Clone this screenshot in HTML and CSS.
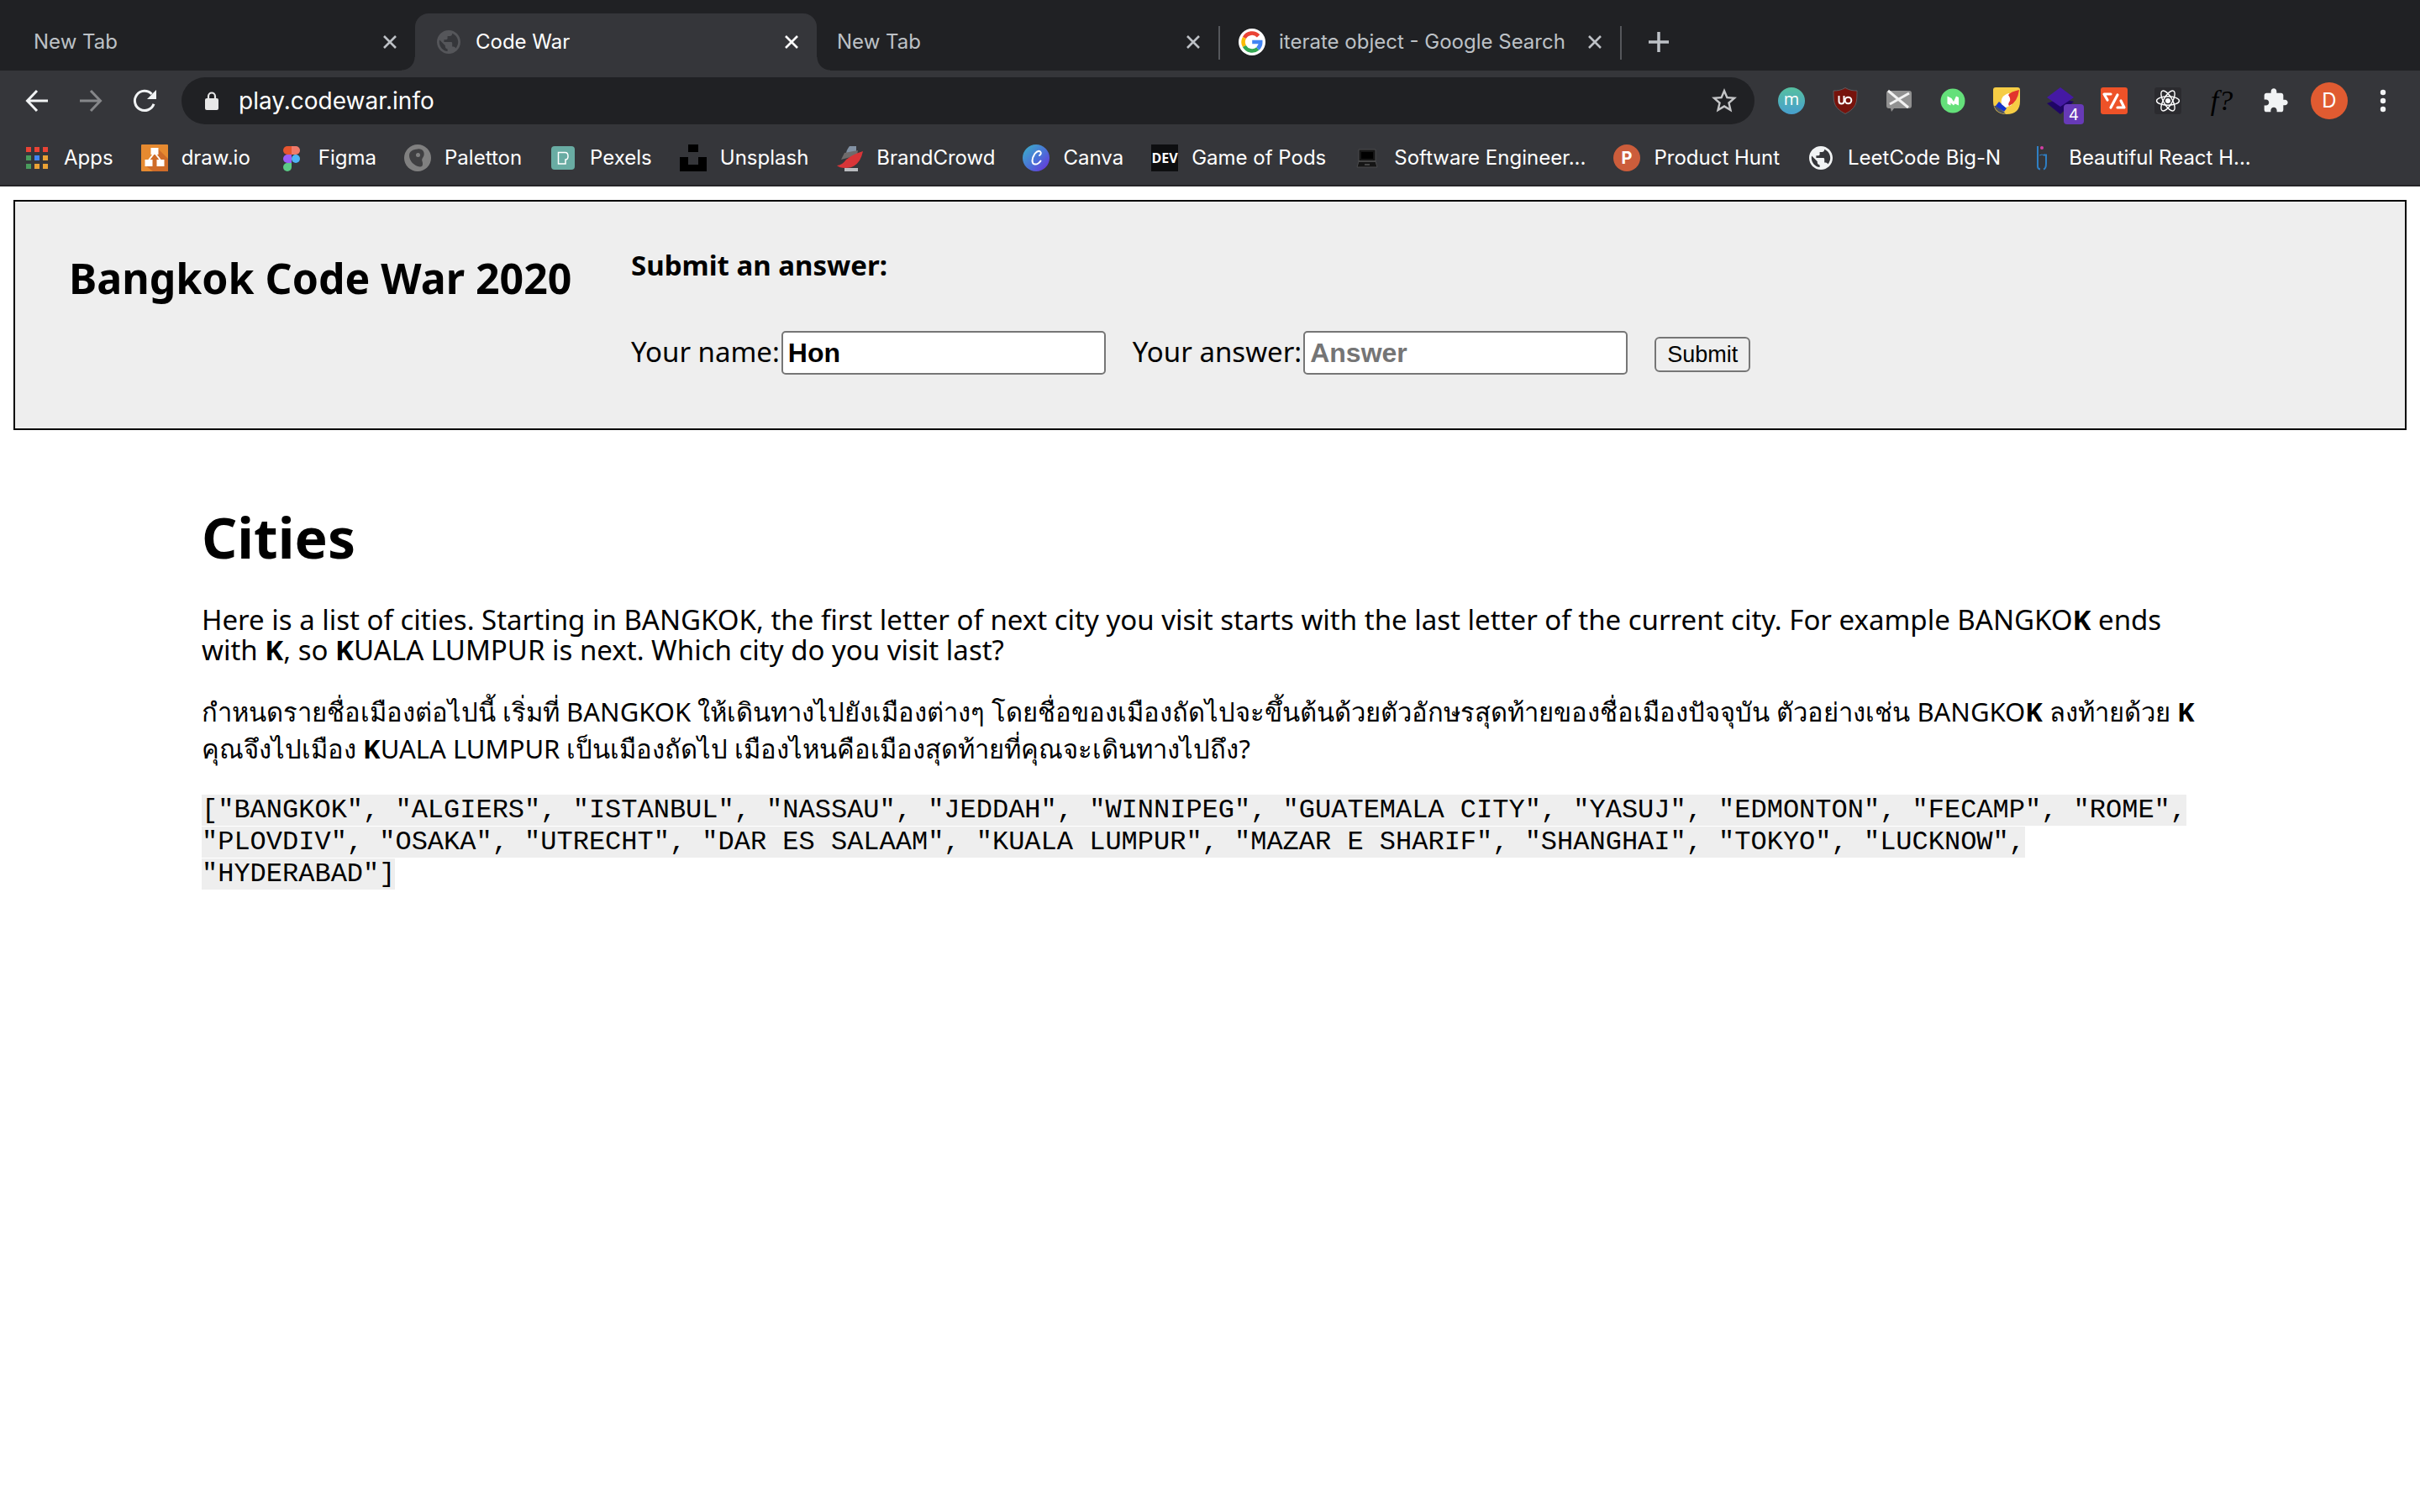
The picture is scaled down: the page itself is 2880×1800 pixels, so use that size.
FILE: index.html
```html
<!DOCTYPE html>
<html lang="en">
<head>
<meta charset="utf-8">
<title>Code War</title>
<link rel="stylesheet" href="styles.css">
</head>
<body>
<svg class="defs" aria-hidden="true">
  <symbol id="globe" viewBox="2 2 20 20"><path d="M12 2C6.480 2 2 6.480 2 12s4.480 10 10 10 10-4.480 10-10S17.520 2 12 2zm-1 17.930c-3.950-.490-7-3.850-7-7.930 0-.620.080-1.210.210-1.790L9 15v1c0 1.100.900 2 2 2v1.930zm6.900-2.540c-.260-.810-1-1.390-1.900-1.390h-1v-3c0-.550-.450-1-1-1H8v-2h2c.550 0 1-.450 1-1V7h2c1.100 0 2-.900 2-2v-.410c2.930 1.190 5 4.060 5 7.410 0 2.080-.800 3.970-2.100 5.390z"/></symbol>
  <symbol id="close" viewBox="0 0 20 20"><path d="M3 3l14 14M17 3L3 17" fill="none" stroke="currentColor" stroke-width="2.600"/></symbol>
</svg>

<div class="browser">
  <div class="tabs">
    <div class="tab"><span class="tab-title">New Tab</span><button class="tab-close" aria-label="Close tab"><svg class="x"><use href="#close"/></svg></button></div>
    <div class="tab tab-active"><span class="tab-icon"><svg class="globe-dim"><use href="#globe"/></svg></span><span class="tab-title">Code War</span><button class="tab-close" aria-label="Close tab"><svg class="x"><use href="#close"/></svg></button></div>
    <div class="tab tab-line"><span class="tab-title">New Tab</span><button class="tab-close" aria-label="Close tab"><svg class="x"><use href="#close"/></svg></button></div>
    <div class="tab tab-line"><span class="tab-icon"><svg class="icon" viewBox="0 0 32 32"><circle cx="16" cy="16" r="16" fill="#fff"/><g fill="none" stroke-width="4.600"><path d="M23.600 8.800A10.400 10.400 0 0 0 6.900 11" stroke="#ea4335"/><path d="M6.900 11a10.400 10.400 0 0 0 0 10" stroke="#fbbc05"/><path d="M6.900 21a10.400 10.400 0 0 0 15.900 3" stroke="#34a853"/><path d="M22.800 24A10.400 10.400 0 0 0 26.200 16H16.200" stroke="#4285f4"/></g></svg></span><span class="tab-title">iterate object - Google Search</span><button class="tab-close" aria-label="Close tab"><svg class="x"><use href="#close"/></svg></button></div>
    <button class="new-tab" aria-label="New tab"><svg class="icon" viewBox="0 0 32 32"><path d="M16 4v24M4 16h24" fill="none" stroke="currentColor" stroke-width="3.500"/></svg></button>
  </div>

  <div class="toolbar">
    <div class="nav">
      <button aria-label="Back"><svg class="icon" viewBox="0 0 32 32"><path d="M29 16H5M16 4L4.500 16 16 28" fill="none" stroke="#f1f3f4" stroke-width="3"/></svg></button>
      <button aria-label="Forward"><svg class="icon" viewBox="0 0 32 32"><path d="M3 16h24M16 4l11.500 12L16 28" fill="none" stroke="#86878a" stroke-width="3"/></svg></button>
      <button aria-label="Reload"><svg class="icon" viewBox="0 0 32 32"><path d="M27 19.700A11.600 11.600 0 1 1 24.500 8" fill="none" stroke="#f1f3f4" stroke-width="3"/><path d="M30 3v11H19z" fill="#f1f3f4"/></svg></button>
    </div>
    <div class="omnibox">
      <svg class="icon" viewBox="0 0 32 32"><rect x="8" y="13" width="16" height="14" rx="2" fill="#e8e8e8"/><path d="M12 14v-3.500a4 4 0 0 1 8 0V14" fill="none" stroke="#e8e8e8" stroke-width="2.200"/></svg>
      <input class="url" type="text" aria-label="Address" value="play.codewar.info">
      <button aria-label="Bookmark this page"><svg class="star" viewBox="0 0 24 24"><path fill="#c4c5c7" d="M22 9.240l-7.190-.620L12 2 9.190 8.630 2 9.240l5.460 4.730L5.820 21 12 17.270 18.180 21l-1.630-7.030L22 9.240zM12 15.400l-3.760 2.270 1-4.280-3.320-2.880 4.380-.380L12 6.100l1.710 4.040 4.380.380-3.320 2.880 1 4.280L12 15.400z"/></svg></button>
    </div>
    <div class="extensions">
      <button aria-label="Extension m"><svg class="icon" viewBox="0 0 32 32"><defs><linearGradient id="mg" x2="0" y2="1"><stop stop-color="#56c0a0"/><stop offset="1" stop-color="#479fce"/></linearGradient></defs><circle cx="16" cy="16" r="16" fill="url(#mg)"/><text x="16" y="21" class="glyph glyph-m">m</text></svg></button>
      <button aria-label="Content blocker"><svg class="icon" viewBox="0 0 32 32"><path d="M16 .500C11 3.500 7 4 2 4c0 14 0 20 14 27.500C30 24 30 18 30 4 25 4 21 3.500 16 .500z" fill="#77130c" stroke="#5c5c60"/><path d="M8.500 10v6.500q0 3 3 3t3-3V10" fill="none" stroke="#fff" stroke-width="2"/><circle cx="19.500" cy="15.500" r="3.800" fill="none" stroke="#fff" stroke-width="2"/></svg></button>
      <button aria-label="Messages off"><svg class="icon" viewBox="0 0 32 32"><path d="M4 4h24q3 0 3 3v15q0 3-3 3H10l-3 4-1-4H4q-3 0-3-3V7q0-3 3-3z" fill="#919191"/><path d="M3 4l24 20M28 7L5 20" stroke="#f2f2f2" stroke-width="3"/></svg></button>
      <button aria-label="Medium"><svg class="icon" viewBox="0 0 32 32"><circle cx="16" cy="16" r="14.500" fill="#64e07a"/><path d="M9.500 10.500l5 2.500 2.500 4 3-6.500 3 1.500v9.500l-4.500-2-1.500 2-3.500-3v3l-4-2z" fill="#fff"/></svg></button>
      <button aria-label="Rocket"><svg class="icon" viewBox="0 0 32 32"><path d="M3 0h26q3 0 3 3v13q0 16-16 16Q0 32 0 16V3q0-3 3-3z" fill="#f6cd45"/><path d="M1 22l4 0 10 9.500Q4 31 1 22z" fill="#495063"/><path d="M7 17l9 8-3 4L3 22z" fill="#1434cc"/><path d="M10 20q-2-10 9-13l3 14-7 3z" fill="#fff"/><path d="M31 3Q21 5 18 9q3 4 2 7-3 4-1 6Q29 18 31 3z" fill="#e2342d"/></svg></button>
      <button class="ext-badged" aria-label="Layers, 4"><svg class="icon" viewBox="0 0 32 32"><path d="M0 19l16-6 16 4-16 15z" fill="#1f0566"/><path d="M16 0l16 12-16 11L0 12z" fill="#4519a4"/></svg><span class="badge">4</span></button>
      <button aria-label="Code snippets"><svg class="icon" viewBox="0 0 32 32"><rect width="32" height="32" rx="3" fill="#ee5228"/><path d="M12 8H4l4 7M20 9l-8 15M24 16l4 8h-8" fill="none" stroke="#fff" stroke-width="3.200" stroke-linejoin="round" stroke-linecap="round"/></svg></button>
      <button aria-label="React tools"><svg class="icon" viewBox="0 0 32 32"><rect width="32" height="32" rx="3" fill="#2b2b2f"/><g fill="none" stroke="#fff" stroke-width="1.400"><ellipse cx="16" cy="16" rx="13.500" ry="5.200"/><ellipse cx="16" cy="16" rx="13.500" ry="5.200" transform="rotate(60 16 16)"/><ellipse cx="16" cy="16" rx="13.500" ry="5.200" transform="rotate(120 16 16)"/></g><circle cx="16" cy="16" r="3" fill="#fff"/></svg></button>
      <button class="ext-font" aria-label="Font finder">f?</button>
      <button aria-label="Extensions"><svg class="icon" viewBox="0 0 24 24"><path fill="#f1f3f4" d="M20.500 11H19V7c0-1.100-.900-2-2-2h-4V3.500C13 2.120 11.880 1 10.500 1S8 2.120 8 3.500V5H4c-1.100 0-1.990.900-1.990 2v3.800H3.500c1.490 0 2.700 1.210 2.700 2.700s-1.210 2.700-2.700 2.700H2V20c0 1.100.900 2 2 2h3.800v-1.500c0-1.490 1.210-2.700 2.700-2.700 1.490 0 2.700 1.210 2.700 2.700V22H17c1.100 0 2-.900 2-2v-4h1.500c1.380 0 2.500-1.120 2.500-2.500S21.880 11 20.500 11z"/></svg></button>
      <button class="avatar" aria-label="Profile">D</button>
      <button aria-label="Menu"><svg class="icon" viewBox="0 0 32 32" fill="#f1f3f4"><circle cx="16" cy="6" r="3.200"/><circle cx="16" cy="16" r="3.200"/><circle cx="16" cy="26" r="3.200"/></svg></button>
    </div>
  </div>

  <nav class="bookmarks" aria-label="Bookmarks">
    <a href="#"><svg class="icon" viewBox="0 0 32 32"><path d="M3 3h6v6H3zM13 3h6v6h-6zM23 3h6v6h-6z" fill="#ea4335"/><path d="M3 13h6v6H3zM3 23h6v6H3z" fill="#4a9c5d"/><path d="M13 13h6v6h-6z" fill="#4285f4"/><path d="M23 13h6v6h-6zM13 23h6v6h-6zM23 23h6v6h-6z" fill="#eaa235"/></svg>Apps</a>
    <a href="#"><svg class="icon" viewBox="0 0 32 32"><rect width="32" height="32" rx="1" fill="#e68a30"/><path d="M20 5l12 12v15H14l-9-7 8-10z" fill="#cf6c29"/><path d="M15 11L8 20M17 11l7 9" stroke="#fff" stroke-width="2"/><path d="M11.500 4h9v8h-9zM4.500 18h9v8h-9zM18.500 18h9v8h-9z" fill="#fff"/></svg>draw.io</a>
    <a href="#"><svg class="icon" viewBox="0 0 32 32"><path d="M16 2h-5a5 5 0 0 0 0 10h5z" fill="#e6552f"/><path d="M16 2h5a5 5 0 0 1 0 10h-5z" fill="#f07a6a"/><path d="M16 12h-5a5 5 0 0 0 0 10h5z" fill="#9b5cf6"/><circle cx="21" cy="17" r="5" fill="#4fb4f6"/><path d="M16 22h-5a5 5 0 1 0 5 5z" fill="#5bcb86"/></svg>Figma</a>
    <a href="#"><svg class="icon" viewBox="0 0 32 32"><circle cx="16" cy="16" r="16" fill="#808080"/><path d="M16 5.500c6-1 8.500 4 7.500 7.500-1 3-3 4-2 7s1 7-3 6.500C12 26 6 19 6 13.500 6 8 10 6 16 5.500z" fill="#404042"/><circle cx="16.500" cy="12.500" r="2.500" fill="#808080"/></svg>Paletton</a>
    <a href="#"><svg class="icon" viewBox="0 0 32 32"><rect x="2" y="2" width="28" height="28" rx="4" fill="#69aca3"/><path d="M10.500 9.500h8q3.500 0 3.500 4.500 0 4-3 4v5h-8.500z" fill="none" stroke="#fff" stroke-width="1.500"/></svg>Pexels</a>
    <a href="#"><svg class="icon" viewBox="0 0 32 32"><path d="M10 0h12v9H10zM0 15h10v9h12v-9h10v17H0z" fill="#000"/></svg>Unsplash</a>
    <a href="#"><svg class="icon" viewBox="0 0 32 32"><path d="M16 2h8v7l-12 2q0-4 4-9z" fill="#8291a3"/><path d="M10 10l16-3-1 6L6 18z" fill="#6f6b6b"/><path d="M1 25q6 0 11-7 7-6 20-10-4 20-21 20-7 0-10-3z" fill="#d83538"/><path d="M10 28h16v4H10z" fill="#babcc0"/></svg>BrandCrowd</a>
    <a href="#"><svg class="icon" viewBox="0 0 32 32"><defs><linearGradient id="cg" x2="1" y2="1"><stop stop-color="#3bb5c8"/><stop offset=".550" stop-color="#4b6fd8"/><stop offset="1" stop-color="#6c2bd9"/></linearGradient></defs><circle cx="16" cy="16" r="16" fill="url(#cg)"/><path d="M20 13q3-2 1-4.500-3-2-6.500 2.500c-4 6-4 12 0 12.500q4 .500 7-4" fill="none" stroke="#fff" stroke-width="2" stroke-linecap="round"/></svg>Canva</a>
    <a href="#"><svg class="icon" viewBox="0 0 32 32"><rect width="32" height="32" fill="#0d0e10"/><text x="16" y="22" class="glyph glyph-dev">DEV</text></svg>Game of Pods</a>
    <a href="#"><svg class="icon" viewBox="0 0 32 32"><path d="M6 6h20v14l2 7H4l2-7z" fill="#151515" stroke="#4b4b4d"/><path d="M9 9h14v8H9z" fill="#000"/><path d="M6 20h20M13 24h6" stroke="#555" stroke-width="1.500"/></svg>Software Engineer...</a>
    <a href="#"><svg class="icon" viewBox="0 0 32 32"><circle cx="16" cy="16" r="16" fill="#cc5d3b"/><text x="16" y="23" class="glyph glyph-p">P</text></svg>Product Hunt</a>
    <a href="#"><span class="icon-slot"><svg class="globe-light"><use href="#globe"/></svg></span>LeetCode Big-N</a>
    <a href="#"><svg class="icon" viewBox="0 0 32 32"><path d="M11 2v24M11 26q0 3 3 3.500M18 12.500h3v10q0 6-3 7" fill="none" stroke="#2f7fc4" stroke-width="2"/><path d="M13 13q3-2 6 0" fill="none" stroke="#2f7fc4"/><circle cx="16" cy="4" r="2" fill="#d43fa4"/></svg>Beautiful React H...</a>
  </nav>
</div>

<div class="page">
  <header class="banner">
    <h1 class="site-title">Bangkok Code War 2020</h1>
    <form class="answer">
      <h2 class="form-title">Submit an answer:</h2>
      <div class="fields">
        <div class="field"><label for="name">Your name:</label><input id="name" type="text" value="Hon"></div>
        <div class="field"><label for="ans">Your answer:</label><input id="ans" type="text" placeholder="Answer"></div>
        <button class="submit" type="button">Submit</button>
      </div>
    </form>
  </header>

  <main class="puzzle-text">
    <h2 class="puzzle-title">Cities</h2>
    <p>Here is a list of cities. Starting in BANGKOK, the first letter of next city you visit starts with the last letter of the current city. For example BANGKO<b>K</b> ends with <b>K</b>, so <b>K</b>UALA LUMPUR is next. Which city do you visit last?</p>
    <p class="thai" lang="th">กำหนดรายชื่อเมืองต่อไปนี้ เริ่มที่ BANGKOK ให้เดินทางไปยังเมืองต่างๆ โดยชื่อของเมืองถัดไปจะขึ้นต้นด้วยตัวอักษรสุดท้ายของชื่อเมืองปัจจุบัน ตัวอย่างเช่น BANGKO<b>K</b> ลงท้ายด้วย <b>K</b> คุณจึงไปเมือง <b>K</b>UALA LUMPUR เป็นเมืองถัดไป เมืองไหนคือเมืองสุดท้ายที่คุณจะเดินทางไปถึง?</p>
    <p class="data"><code>["BANGKOK", "ALGIERS", "ISTANBUL", "NASSAU", "JEDDAH", "WINNIPEG", "GUATEMALA CITY", "YASUJ", "EDMONTON", "FECAMP", "ROME", "PLOVDIV", "OSAKA", "UTRECHT", "DAR ES SALAAM", "KUALA LUMPUR", "MAZAR E SHARIF", "SHANGHAI", "TOKYO", "LUCKNOW", "HYDERABAD"]</code></p>
  </main>
</div>
</body>
</html>
```
FILE: styles.css
```css
* { box-sizing: border-box; }
body { margin: 0; background: #fff; color: #000; font-family: "Noto Sans", sans-serif; font-size: 33px; line-height: 36px; }
svg { display: block; flex: none; }
.defs { display: none; }
.icon { width: 32px; height: 32px; overflow: visible; }

/* Browser frame */
.browser { background: #35363a; border-bottom: 2px solid #252427; font-family: Inter, sans-serif; font-size: 24px; line-height: 32px; color: #fff; }
.browser button { display: flex; align-items: center; justify-content: center; padding: 0; border: 0; background: none; color: inherit; font: inherit; }

.tabs { display: flex; background: #202124; padding: 16px 16px 0; }
.tab { position: relative; display: flex; align-items: center; gap: 16px; width: 478px; height: 68px; padding: 0 20px 0 24px; color: #bdc1c6; }
.tab-title { flex: 1; white-space: nowrap; overflow: hidden; }
.tab-icon { display: flex; align-items: center; justify-content: center; width: 32px; }
.tab .tab-close { width: 20px; margin-left: -16px; }
.x { width: 20px; height: 20px; }
.tab-active { background: #35363a; border-radius: 16px 16px 0 0; color: #fff; }
.tab-active::before, .tab-active::after { content: ""; position: absolute; bottom: 0; width: 16px; height: 16px; }
.tab-active::before { left: -16px; background: radial-gradient(circle at 0 0, #202124 15px, #35363a 16px); }
.tab-active::after { right: -16px; background: radial-gradient(circle at 100% 0, #202124 15px, #35363a 16px); }
.tab-line::after { content: ""; position: absolute; right: -2px; top: 15px; width: 2px; height: 40px; background: #55575b; }
.new-tab { width: 92px; height: 68px; }
.browser .new-tab { color: #bdc1c6; }
.globe-dim { width: 28px; height: 28px; fill: #55565a; }
.globe-light { width: 28px; height: 28px; fill: #f1f3f4; }
.icon-slot { display: flex; justify-content: center; width: 32px; }

.toolbar { display: flex; align-items: center; gap: 28px; padding: 8px 28px; }
.nav, .extensions { display: flex; align-items: center; gap: 32px; }
.extensions button { width: 32px; height: 32px; }
.omnibox { flex: 1; display: flex; align-items: center; gap: 16px; height: 56px; padding: 0 18px 0 20px; border-radius: 28px; background: #202124; }
.url { flex: 1; min-width: 0; border: 0; padding: 0; background: none; color: #fff; font: 28px/36px Inter, sans-serif; }
.star { width: 36px; height: 36px; }
.glyph { fill: #fff; text-anchor: middle; }
.glyph-m { font: 20px "Open Sans", sans-serif; }
.glyph-dev { font: bold 16px "Open Sans", sans-serif; }
.glyph-p { font: bold 20px Inter, sans-serif; }
.ext-badged { position: relative; }
.badge { position: absolute; left: 20px; top: 20px; width: 24px; height: 24px; border-radius: 4px; background: #673ab7; font-size: 19px; line-height: 26px; text-align: center; }
.extensions .ext-font { color: #000; font: italic 34px "Liberation Serif", serif; }
.extensions .avatar { width: 44px; height: 44px; margin: 0 -6px; border-radius: 50%; background: #e05b31; }

.bookmarks { display: flex; align-items: center; gap: 33px; height: 64px; padding: 0 28px; overflow: hidden; }
.bookmarks a { display: flex; align-items: center; gap: 16px; color: #fff; text-decoration: none; white-space: nowrap; }

/* Page */
.page { padding: 16px; }
.banner { display: grid; grid-template-columns: 669px 1fr; padding: 58px 64px 64px; border: 2px solid #000; background: #eee; }
.site-title { margin: 5px 0 0; font-size: 50px; line-height: 56px; }
.form-title { margin: 0 0 60px; font-size: 33px; line-height: 36px; }
.fields { display: flex; align-items: baseline; gap: 32px; }
.field { display: flex; align-items: baseline; gap: 2px; }
.field input { width: 386px; height: 52px; padding: 0 6px; border: 2px solid #767676; border-radius: 5px; background: #fff; color: #000; font: bold 32px "Liberation Sans", sans-serif; }
.field input::placeholder { color: #757575; opacity: 1; }
.submit { width: 114px; height: 42px; padding: 0; border: 2px solid #767676; border-radius: 6px; background: #efefef; color: #000; font: 27px "Liberation Sans", sans-serif; }

.puzzle-text { padding: 87px 224px 0; }
.puzzle-title { margin: 0 0 41px; font-size: 66px; line-height: 80px; }
.puzzle-text p { margin: 0 0 33px; }
.puzzle-text .thai { font-size: 31px; line-height: 44px; }
.data, .data code { font-family: "Liberation Mono", monospace; font-size: 32px; line-height: 38px; }
.data code { background: #eee; }
```
